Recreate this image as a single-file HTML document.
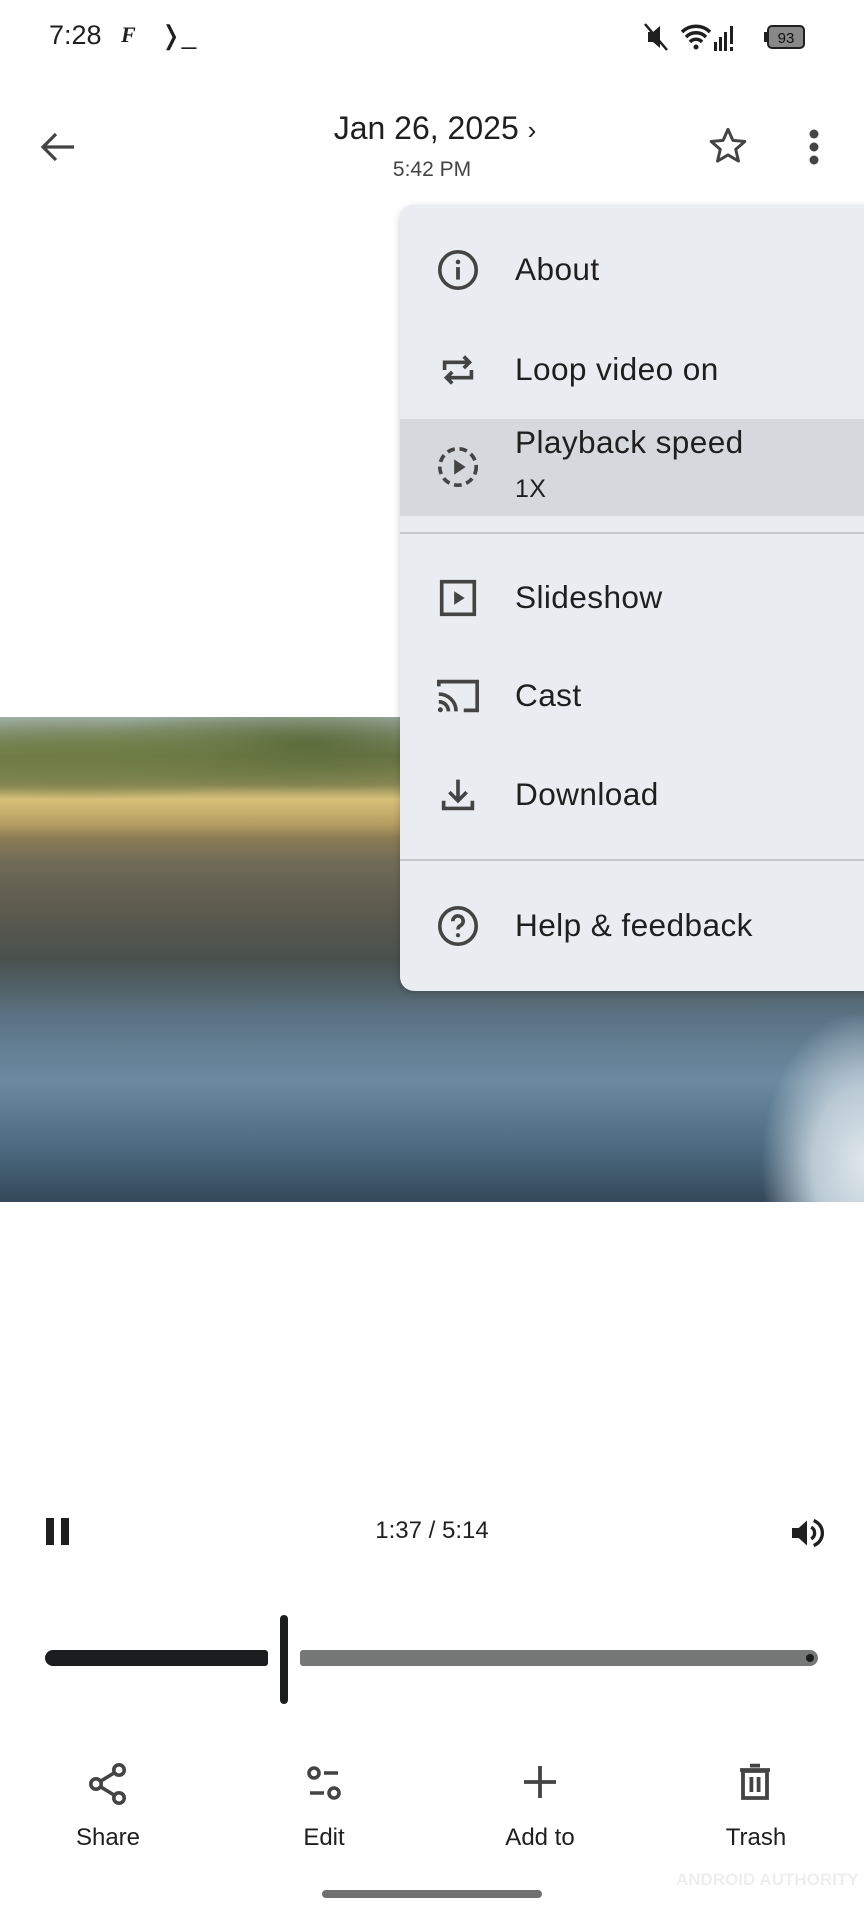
<!DOCTYPE html>
<html><head><meta charset="utf-8"><style>
*{margin:0;padding:0;box-sizing:border-box}
body{width:864px;height:1920px;background:#fff;position:relative;overflow:hidden;font-family:"Liberation Sans",sans-serif;color:#1f1f1f}
.a{position:absolute}
.menu{left:400px;top:205px;width:470px;height:786px;background:#e9ecf0;border-radius:14px 0 0 14px;box-shadow:0 2px 8px rgba(0,0,0,.2)}
.mi{position:absolute;left:115px;font-size:31.6px;color:#1f1f1f;letter-spacing:.4px;white-space:nowrap}
.ic{position:absolute;left:35px;width:46px;height:46px}
.lbl{position:absolute;font-size:24px;transform:translateX(-50%);top:1824px}
</style></head><body>
<div class="a" style="left:49px;top:20px;font-size:27px">7:28</div>
<div class="a" style="left:121px;top:22px;font-size:22px;font-style:italic;font-weight:bold;font-family:'Liberation Serif',serif">F</div>
<div class="a" style="left:160px;top:20px;font-size:26px">&#x276D;_</div>
<svg class="a" style="left:642px;top:20px" width="180" height="34" viewBox="0 0 180 34">
<path d="M6 12h5l7-6v22l-7-6H6z" fill="#1f1f1f"/><path d="M3 4l22 26" stroke="#1f1f1f" stroke-width="2.5"/>
<path d="M40 12a20 20 0 0 1 28 0M44 17a14 14 0 0 1 20 0M48 22a8 8 0 0 1 12 0" stroke="#1f1f1f" stroke-width="3.5" fill="none"/><circle cx="54" cy="27" r="2.5" fill="#1f1f1f"/>
<rect x="72" y="22" width="3" height="9" fill="#1f1f1f"/><rect x="77" y="17" width="3" height="14" fill="#1f1f1f"/><rect x="82" y="12" width="3" height="19" fill="#1f1f1f"/><rect x="88" y="6" width="3" height="18" fill="#1f1f1f"/><rect x="88" y="27" width="3" height="4" fill="#1f1f1f"/>
<rect x="126" y="6" width="36" height="22" rx="4" fill="#888" stroke="#1f1f1f" stroke-width="2"/><rect x="122" y="12" width="3" height="10" fill="#1f1f1f"/>
<text x="144" y="23" font-size="15" text-anchor="middle" font-family="Liberation Sans" fill="#111">93</text></svg>
<svg class="a" style="left:38px;top:130px" width="40" height="34" viewBox="0 0 40 34"><path d="M36 17H5M18 4L5 17l13 13" stroke="#444" stroke-width="3.2" fill="none"/></svg>
<div class="a" style="left:0;width:864px;text-align:center;top:110px;font-size:32px;padding-left:6px">Jan 26, 2025 <span style="font-size:26px">›</span></div>
<div class="a" style="left:0;width:864px;text-align:center;top:158px;font-size:21px;color:#444">5:42 PM</div>
<svg class="a" style="left:706px;top:125px" width="44" height="42" viewBox="0 0 24 24"><path d="M12 2.5l2.8 6.3 6.8.6-5.2 4.5 1.6 6.7L12 17.1 6 20.6l1.6-6.7L2.4 9.4l6.8-.6z" stroke="#444" stroke-width="1.7" fill="none" stroke-linejoin="round"/></svg>
<svg class="a" style="left:804px;top:128px" width="20" height="40"><circle cx="10" cy="6" r="4.5" fill="#444"/><circle cx="10" cy="19" r="4.5" fill="#444"/><circle cx="10" cy="32" r="4.5" fill="#444"/></svg>

<div class="a" style="left:0;top:717px;width:864px;height:485px;background:linear-gradient(180deg,#a6b6b4 0%,#6f7a4a 8%,#8b8a55 14%,#d8c07a 17%,#b59e62 22%,#8c7b55 25%,#6f6b58 30%,#5c5a4e 40%,#49514e 50%,#5b7385 62%,#6b8aa0 75%,#4d6c82 88%,#34495a 100%)"></div>
<div class="a" style="left:0;top:717px;width:400px;height:95px;background:radial-gradient(ellipse at 20% 40%,#6f7d44 0,transparent 55%),radial-gradient(ellipse at 75% 30%,#5b6b3a 0,transparent 50%)"></div>
<div class="a" style="left:760px;top:1010px;width:104px;height:192px;background:radial-gradient(ellipse at 100% 80%,#dfe7ec 0,#b9c9d4 35%,transparent 70%)"></div>

<div class="a menu">
<div class="a" style="left:0;top:214px;width:470px;height:97px;background:#d5d8dc"></div>
<div class="a" style="left:0;top:327px;width:470px;height:2px;background:#c4c8cc"></div>
<div class="a" style="left:0;top:654px;width:470px;height:2px;background:#c4c8cc"></div>
<svg class="ic" style="top:42px" viewBox="0 0 24 24"><circle cx="12" cy="12" r="9.5" stroke="#444" stroke-width="1.9" fill="none"/><rect x="11" y="10.5" width="2" height="6.5" fill="#444"/><circle cx="12" cy="7.8" r="1.2" fill="#444"/></svg>
<div class="mi" style="top:46px">About</div>
<svg class="ic" style="top:142px" viewBox="0 0 24 24"><path d="M5 12V8h13M15 5l3 3-3 3M19 12v4H6M9 19l-3-3 3-3" stroke="#444" stroke-width="1.9" fill="none"/></svg>
<div class="mi" style="top:146px">Loop video on</div>
<svg class="ic" style="top:239px" viewBox="0 0 24 24"><circle cx="12" cy="12" r="9.5" stroke="#444" stroke-width="1.9" fill="none" stroke-dasharray="4 2.5"/><path d="M10 8v8l6-4z" fill="#444"/></svg>
<div class="mi" style="top:219px">Playback speed</div>
<div class="mi" style="top:270px;font-size:25px">1X</div>
<svg class="ic" style="top:370px" viewBox="0 0 24 24"><rect x="3.5" y="3.5" width="17" height="17" stroke="#444" stroke-width="1.9" fill="none"/><path d="M10 8.5v7l5.5-3.5z" fill="#444"/></svg>
<div class="mi" style="top:374px">Slideshow</div>
<svg class="ic" style="top:468px" viewBox="0 0 24 24"><path d="M2 7V4.5h20v15h-7" stroke="#444" stroke-width="1.9" fill="none"/><path d="M2 11a9 9 0 0 1 9 9M2 15a5 5 0 0 1 5 5" stroke="#444" stroke-width="1.9" fill="none"/><circle cx="2.8" cy="19.2" r="1.3" fill="#444"/></svg>
<div class="mi" style="top:472px">Cast</div>
<svg class="ic" style="top:567px" viewBox="0 0 24 24"><path d="M12 4v11M7.5 10.5L12 15l4.5-4.5M4.5 15v4h15v-4" stroke="#444" stroke-width="1.9" fill="none"/></svg>
<div class="mi" style="top:571px">Download</div>
<svg class="ic" style="top:698px" viewBox="0 0 24 24"><circle cx="12" cy="12" r="9.5" stroke="#444" stroke-width="1.9" fill="none"/><path d="M9.3 9.5a2.7 2.7 0 1 1 3.8 2.4c-.8.4-1.1.9-1.1 1.9" stroke="#444" stroke-width="1.9" fill="none"/><circle cx="12" cy="16.8" r="1.1" fill="#444"/></svg>
<div class="mi" style="top:702px">Help &amp; feedback</div>
</div>

<div class="a" style="left:46px;top:1518px;width:8px;height:27px;background:#1f1f1f"></div>
<div class="a" style="left:61px;top:1518px;width:8px;height:27px;background:#1f1f1f"></div>
<div class="a" style="left:0;width:864px;text-align:center;top:1517px;font-size:24px">1:37 / 5:14</div>
<svg class="a" style="left:786px;top:1513px" width="42" height="40" viewBox="0 0 24 24"><path d="M3 9h4l5-4.5v15L7 15H3z" fill="#1f1f1f"/><path d="M14.5 8.5a4 4 0 0 1 0 7M16 4.5a8 8 0 0 1 0 15" stroke="#1f1f1f" stroke-width="2" fill="none"/></svg>
<div class="a" style="left:45px;top:1650px;width:223px;height:16px;border-radius:8px 3px 3px 8px;background:#1b1d1e"></div>
<div class="a" style="left:280px;top:1615px;width:8px;height:89px;border-radius:4px;background:#1b1d1e"></div>
<div class="a" style="left:300px;top:1650px;width:518px;height:16px;border-radius:3px 8px 8px 3px;background:#767878"></div>
<div class="a" style="left:806px;top:1654px;width:8px;height:8px;border-radius:50%;background:#1b1d1e"></div>

<svg class="a" style="left:84px;top:1760px" width="48" height="48" viewBox="0 0 24 24"><circle cx="17.5" cy="5" r="2.6" stroke="#444" stroke-width="1.8" fill="none"/><circle cx="6" cy="12" r="2.6" stroke="#444" stroke-width="1.8" fill="none"/><circle cx="17.5" cy="19" r="2.6" stroke="#444" stroke-width="1.8" fill="none"/><path d="M8.3 10.6l7-4.3M8.3 13.4l7 4.3" stroke="#444" stroke-width="1.8"/></svg>
<svg class="a" style="left:300px;top:1760px" width="48" height="48" viewBox="0 0 24 24"><circle cx="7" cy="6.5" r="2.5" stroke="#444" stroke-width="1.8" fill="none"/><path d="M12 6.5h7M5 16.5h7" stroke="#444" stroke-width="1.8"/><circle cx="17" cy="16.5" r="2.5" stroke="#444" stroke-width="1.8" fill="none"/></svg>
<svg class="a" style="left:516px;top:1758px" width="48" height="48" viewBox="0 0 24 24"><path d="M12 4v16M4 12h16" stroke="#444" stroke-width="1.9"/></svg>
<svg class="a" style="left:731px;top:1758px" width="48" height="48" viewBox="0 0 24 24"><path d="M6 6.5h12V20H6z" stroke="#444" stroke-width="1.9" fill="none"/><path d="M4.5 6h15M9.5 3.8h5M10.2 9.5v7.5M13.8 9.5v7.5" stroke="#444" stroke-width="1.9"/></svg>
<div class="lbl" style="left:108px">Share</div>
<div class="lbl" style="left:324px">Edit</div>
<div class="lbl" style="left:540px">Add to</div>
<div class="lbl" style="left:756px">Trash</div>
<div class="a" style="left:676px;top:1870px;font-size:17px;color:#eee;white-space:nowrap;font-weight:bold">ANDROID AUTHORITY</div>
<div class="a" style="left:322px;top:1890px;width:220px;height:8px;border-radius:4px;background:#707070"></div>
</body></html>
